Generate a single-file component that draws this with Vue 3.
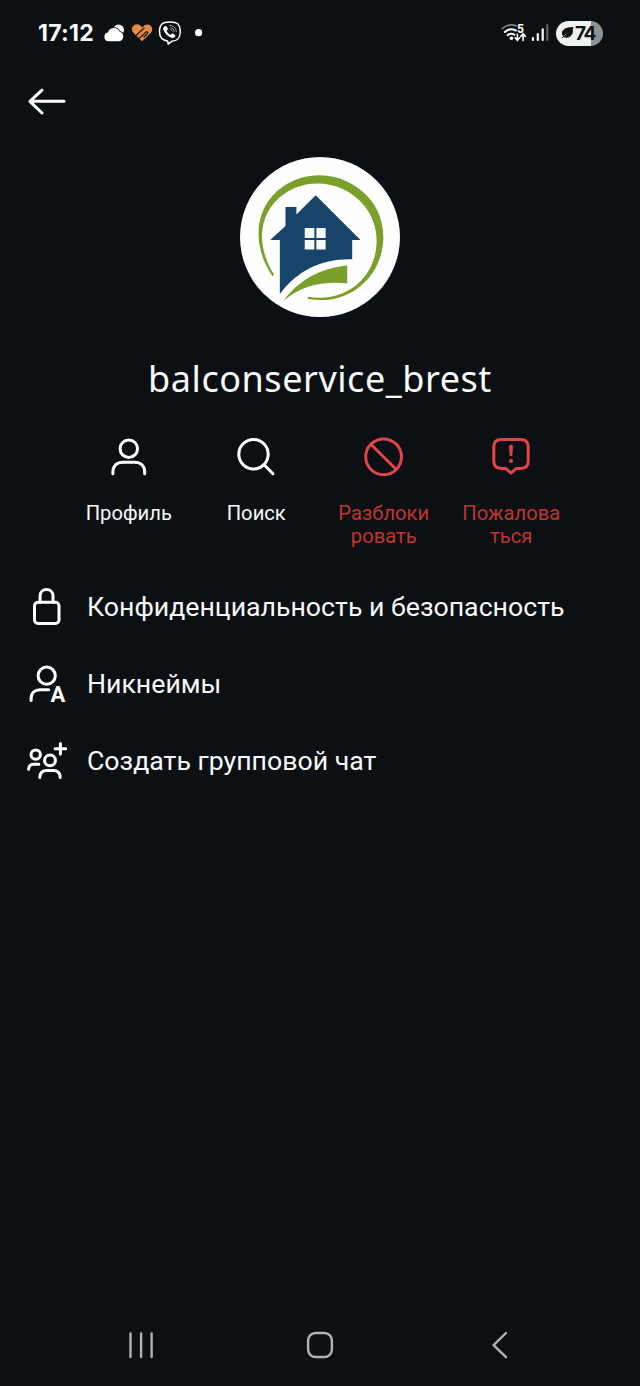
<template>
  <div class="screen">
    <header class="status-bar">
      <span class="clock">17:12</span>
      <svg class="status-left" viewBox="103 18 102 30">
        <!-- weather -->
        <circle cx="118.6" cy="30" r="5.4" fill="#fff" />
        <path d="M108.6 41.200a4.400 4.400 0 0 1-.7-8.700 6.300 6.300 0 0 1 11.800-.7 4.800 4.800 0 0 1-.6 9.400z" fill="#fff" stroke="#0c1014" stroke-width="1.6" paint-order="stroke" />
        <!-- striped heart -->
        <path d="M142 41.300l-8.700-8.600c-4.200-5 2.500-11.400 7.500-6.700l1.500 1.400 1.400-1.400c5-4.500 11.400 1.700 7.300 6.700z" fill="#e58a43" />
        <path d="M135.800 35.800l8.300-7.700M139.300 38.200l6.500-6c1.300-1.200 2.600.2 1.400 1.500l-3.300 3.300" fill="none" stroke="#241a15" stroke-width="1.300" stroke-linecap="round" />
        <!-- call bubble -->
        <path d="M170 21.900c7.300 0 10.200 2.400 10.200 9.700 0 7.200-2.900 9.500-8.500 9.700l-3.500 2.900-.5-3.100c-5.800-.7-8.200-3.300-8.200-9.500 0-7.300 3-9.700 10.500-9.700z" fill="none" stroke="#fff" stroke-width="1.5" stroke-linejoin="round" />
        <path d="M165.2 26.100c1.100-.7 3.200 2.500 2.600 3.400l-1.100 1.200c.8 2 2.200 3.400 4 4l1.300-1.100c1-.6 4 1.600 3.300 2.700-1.100 1.800-2.600 2.200-4.400 1.300-3.600-1.800-6.300-4.700-7.600-8.200-.5-1.400.4-2.500 1.900-3.300z" fill="#fff" />
        <path d="M169.900 25.500c3.700-.1 6.300 2.400 6.400 6.300M170.600 27.800c2.200.1 3.400 1.300 3.500 3.600M171 29.700c.8.1 1.100.5 1.200 1.300" fill="none" stroke="#c8cacc" stroke-width=".8" stroke-linecap="round" />
        <circle cx="198.600" cy="32.700" r="3.600" fill="#fff" />
      </svg>
      <svg class="status-right" viewBox="500 18 50 30">
        <g fill="none" stroke-linecap="round">
          <path d="M502.300 28.600c4.100-3.800 9.200-4.600 14-2.800" stroke="#7d8184" stroke-width="1.8" />
          <path d="M504.800 32c3.300-2.900 7.200-3.500 11-1.500M507.600 35.200c2.300-1.900 4.600-2 6.900-.4" stroke="#fff" stroke-width="2" />
          <path d="M517.400 34.300v5.700m-2.200-2.200l2.200 2.400 2.200-2.400M523.100 40.500v-6.500m-2.300 2.400l2.300-2.600 2.300 2.600" stroke="#fff" stroke-width="1.600" />
        </g>
        <circle cx="511.400" cy="38.300" r="1.800" fill="#fff" />
        <text x="517" y="32.600" class="wifi-gen">5</text>
        <g fill="none" stroke="#fff" stroke-width="2.200" stroke-linecap="round">
          <path d="M532.900 38v2M537.800 34v6M542.700 29.400v10.600" />
          <path d="M547.300 25v15" stroke="#606467" />
        </g>
      </svg>
      <div class="battery">
        <svg class="leaf" viewBox="0 0 12 12">
          <path d="M11.600.6C6.200.7 1 1.500.9 6.400c0 1 .3 1.700.6 2.200L7.300 4.400 2.500 9.800c5 1.700 8.800-1.800 8.400-5.700-.1-1.300 0-2.300.7-3.500z" />
          <path d="M.5 11.200l2.300-2.700" />
        </svg>
        <span>74</span>
      </div>
    </header>

    <div class="toolbar">
      <svg class="back" viewBox="26 86 42 30">
        <path d="M64 101.300H30M42 90.200L29.900 101.300 42 113" />
      </svg>
    </div>

    <section class="profile">
      <svg class="avatar" viewBox="28 29 482 482">
        <circle cx="269" cy="270" r="241" fill="#fefefe" />
        <path d="M126 388C60 292 72 175 158 118 242 61 352 78 418 154c62 72 53 187-14 252-48 48-112 62-173 50l3-6c57 10 113-4 156-46 61-60 67-164 11-230-60-70-160-86-238-35C85 192 72 291 131 384z" fill="#7a9f2b" />
        <path d="M119 279l46-42v-57h33v22l58-58 135 135h-25v58c-89-3-166 33-218 105V279z" fill="#194469" />
        <path d="M223 243h29v30h-29zM258 243h28v30h-28zM223 279h29v29h-29zM258 279h28v29h-28z" fill="#f7fbfc" />
        <path d="M160 461c42-58 109-98 191-105v53c-77-6-134 5-191 52z" fill="#7a9f2b" />
      </svg>
      <h1 class="username">balconservice_brest</h1>
    </section>

    <section class="actions">
      <div v-for="action in actions" :key="action.icon" class="action" :class="{ danger: action.danger }">
        <svg v-if="action.icon === 'profile'" class="action-icon" viewBox="108.500 437 40 40">
          <circle cx="128.300" cy="448.700" r="8.700" />
          <path d="M112.400 473.800v-1.300c0-6.500 4-10.300 10-10.300h11.800c6 0 10 3.800 10 10.300v1.300" />
        </svg>
        <svg v-else-if="action.icon === 'search'" class="action-icon" viewBox="236 437 40 40">
          <circle cx="253.500" cy="454.200" r="14.700" />
          <path d="M264 464.800l9 9" />
        </svg>
        <svg v-else-if="action.icon === 'block'" class="action-icon" viewBox="363.700 437 40 40">
          <circle cx="383.300" cy="456.800" r="17.900" />
          <path d="M370.800 444.500l25 24.700" />
        </svg>
        <svg v-else class="action-icon" viewBox="490.700 437 40 40">
          <path d="M501 439.500h19.300c5 0 7.600 2.700 7.600 7.600v14c0 5-2.600 7.400-7.600 7.400h-4.500l-5.100 4.700-5.100-4.700H501c-5 0-7.500-2.500-7.500-7.400v-14c0-4.900 2.500-7.600 7.500-7.600z" />
          <path class="solid" d="M508.700 446.700c0-2.500 4-2.500 4 0l-.6 8.200c-.1 1.600-2.700 1.600-2.800 0z" />
          <circle class="solid" cx="510.700" cy="461" r="2" />
        </svg>
        <span class="action-label">
          <span v-for="line in action.lines" :key="line">{{ line }}</span>
        </span>
      </div>
    </section>

    <nav class="menu">
      <a v-for="item in menu" :key="item.icon" class="menu-item">
        <svg v-if="item.icon === 'lock'" class="menu-icon" viewBox="26 586 42 42">
          <rect x="34.500" y="602.200" width="24.500" height="21.300" rx="3.600" />
          <path d="M40.100 602v-6c0-8.600 12.900-8.600 12.900 0v6" />
        </svg>
        <svg v-else-if="item.icon === 'nickname'" class="menu-icon" viewBox="26 663 42 42">
          <circle cx="46.700" cy="675.700" r="8.600" />
          <path d="M31.100 700.500v-2c0-5.500 3.500-8.800 9-8.800h8.500" />
          <text x="57.800" y="702" class="nick-letter">A</text>
        </svg>
        <svg v-else class="menu-icon" viewBox="26 740 42 42">
          <circle cx="35.700" cy="754.600" r="4.700" />
          <path d="M28.600 769.300c0-3.400 2-5 5.200-5h5" />
          <circle cx="50" cy="760.400" r="5.400" />
          <path d="M39.800 777.600c0-4.700 2.500-7.100 7-7.100h6.400c4.500 0 7 2.400 7 7.100" />
          <path d="M60.400 743.500v10.600M55.100 748.800h10.600" />
        </svg>
        <span class="menu-label">{{ item.label }}</span>
      </a>
    </nav>

    <footer class="nav-bar">
      <svg viewBox="127 1330 30 30">
        <path d="M130.500 1333.500v23.500M141.100 1333.500v23.500M151.600 1333.500v23.500" />
      </svg>
      <svg viewBox="306 1330 30 30">
        <rect x="308.100" y="1333" width="23.800" height="24" rx="7.500" />
      </svg>
      <svg viewBox="485 1330 30 30">
        <path d="M506 1333L493.600 1345.200 506 1357.200" />
      </svg>
    </footer>
  </div>
</template>

<script setup>
const actions = [
  { icon: 'profile', lines: ['Профиль'] },
  { icon: 'search', lines: ['Поиск'] },
  { icon: 'block', lines: ['Разблоки', 'ровать'], danger: true },
  { icon: 'report', lines: ['Пожалова', 'ться'], danger: true }
];

const menu = [
  { icon: 'lock', label: 'Конфиденциальность и безопасность' },
  { icon: 'nickname', label: 'Никнеймы' },
  { icon: 'group', label: 'Создать групповой чат' }
];
</script>

<style>
body { margin: 0; background: #0c1014; }
</style>

<style scoped>
* { box-sizing: border-box; }
svg { display: block; flex: none; overflow: visible; }
.screen {
  width: 640px; height: 1386px; display: flex; flex-direction: column; overflow: hidden;
  background: #0c1014; color: #f8f9f9; font-family: Roboto, sans-serif;
}

/* STATUS BAR */
.status-bar { height: 66px; padding: 0 37px; display: flex; align-items: center; }
.clock { width: 66px; padding-left: 1px; font-family: Inter, sans-serif; font-size: 23px; line-height: 26px; font-weight: 700; letter-spacing: 0.3px; white-space: nowrap; }
.status-left { width: 102px; height: 30px; }
.status-right { width: 50px; height: 30px; margin-left: auto; }
.wifi-gen { font: 700 12px Roboto, sans-serif; fill: #fff; }
.battery {
  width: 47px; height: 25px; margin-left: 6px; padding-left: 5px; border-radius: 13px;
  display: flex; align-items: center; background: linear-gradient(90deg, #eff0f0 35px, #8e9191 35px);
  color: #111416; font-family: Inter, sans-serif; font-size: 19px; font-weight: 700; letter-spacing: -1.4px;
}
.leaf { width: 13px; height: 12px; margin-right: 1px; fill: #111416; stroke: #111416; stroke-width: 1; }

/* TOOLBAR */
.toolbar { height: 91px; padding: 20px 26px 0; }
.back { width: 42px; height: 30px; fill: none; stroke: #fff; stroke-width: 3; stroke-linecap: round; stroke-linejoin: round; }

/* PROFILE */
.profile { height: 280px; display: flex; flex-direction: column; align-items: center; }
.avatar { width: 160px; height: 160px; margin-right: 1px; }
.username { margin: 36px 0 0; font-family: "Noto Sans", sans-serif; font-size: 36px; line-height: 52px; font-weight: 400; letter-spacing: 0.55px; white-space: nowrap; }

/* ACTIONS */
.actions { height: 131px; margin: 0 65px; display: grid; grid-template-columns: repeat(4, 1fr); }
.action { display: flex; flex-direction: column; align-items: center; }
.action-icon { width: 40px; height: 40px; fill: none; stroke: #fff; stroke-width: 3; stroke-linecap: round; stroke-linejoin: round; }
.action-label { margin-top: 25px; display: flex; flex-direction: column; align-items: center; font-size: 20.2px; line-height: 23px; white-space: nowrap; }
.danger { color: #c0352e; }
.danger .action-icon { stroke: #e0454a; }
.action-icon .solid { fill: #e0454a; stroke: none; }

/* MENU */
.menu { flex: 1; }
.menu-item { height: 77px; padding-left: 26px; display: flex; align-items: center; gap: 19px; }
.menu-icon { width: 42px; height: 42px; fill: none; stroke: #fff; stroke-width: 3; stroke-linecap: round; stroke-linejoin: round; }
.nick-letter { font: 700 22px Roboto, sans-serif; fill: #fff; stroke: none; text-anchor: middle; }
.menu-label { font-size: 26.7px; line-height: 32px; white-space: nowrap; }

/* SYSTEM NAVIGATION */
.nav-bar { height: 82px; padding: 0 125px 0 127px; display: flex; align-items: center; justify-content: space-between; }
.nav-bar svg { width: 30px; height: 30px; fill: none; stroke: #b0b3b5; stroke-width: 2.4; stroke-linecap: round; stroke-linejoin: round; }
</style>
